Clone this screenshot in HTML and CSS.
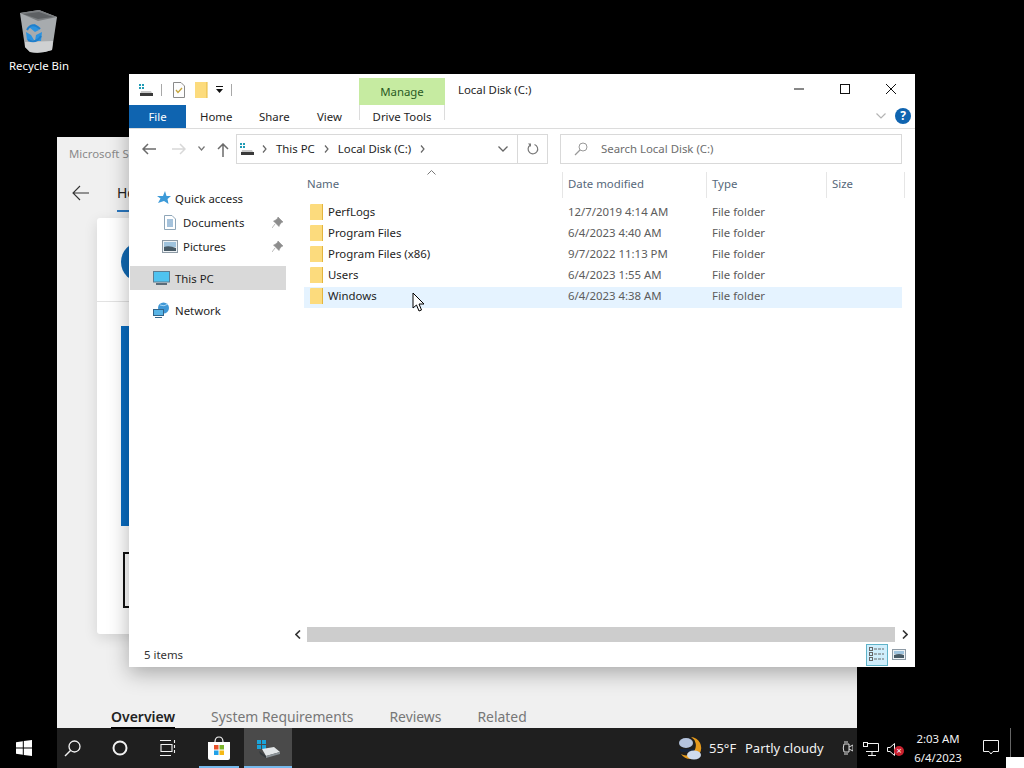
FILE: index.html
```html
<!DOCTYPE html>
<html lang="en">
<head>
<meta charset="utf-8">
<title>Local Disk (C:)</title>
<link rel="stylesheet" href="styles.css">
</head>
<body>
<div class="desktop">
  <div class="desk-icon">
    <svg class="bin" width="44" height="44" viewBox="0 0 44 44">
      <path d="M3 3 L22 0 L40 7 L35 40 Q24 44 13 42 L8 37 Z" fill="#a7abae"/>
      <path d="M3 3 L22 0 L40 7 L21 11 Z" fill="#7b7e81"/>
      <path d="M6 4 L22 2 L36 7 L21 9 Z" fill="#5d6063"/>
      <path d="M8 32 L36 31 L35 40 Q24 44 13 42 L8 37 Z" fill="#cfd1d2"/>
      <path d="M12 17 L18 14 L22 20 L18 22 Z M9 22 L14 25 L17 30 L10 30 Z M19 25 L25 22 L24 31 L18 31 Z" fill="#2b93e0"/>
      <path d="M10 20 Q15 11 23 19 M11 30 Q19 34 24 26" fill="none" stroke="#1f7fcc" stroke-width="2"/>
    </svg>
    <span>Recycle Bin</span>
  </div>

  <section class="store">
    <div class="store-title">Microsoft Store</div>
    <div class="store-nav">
      <svg class="store-back" width="18" height="16" viewBox="0 0 18 16"><path d="M8 1 L1 8 L8 15 M1 8 H17" fill="none" stroke="#333" stroke-width="1.1"/></svg>
      <span class="store-home">Home</span>
    </div>
    <div class="store-card">
      <div class="store-avatar"></div>
      <div class="store-rule"></div>
      <div class="store-banner"></div>
      <div class="store-box"></div>
    </div>
    <nav class="store-tabs">
      <span class="store-tab active">Overview</span>
      <span class="store-tab">System Requirements</span>
      <span class="store-tab">Reviews</span>
      <span class="store-tab">Related</span>
    </nav>
  </section>

  <section class="explorer">
    <header class="titlebar">
      <div class="qat">
        <svg class="q-drive" width="16" height="14" viewBox="0 0 16 14"><g fill="#1f9bb5"><rect x="1" y="1" width="2" height="2"/><rect x="4" y="1" width="2" height="2"/><rect x="1" y="4" width="2" height="2"/><rect x="4" y="4" width="2" height="2"/></g><path d="M3 8 H13 L15 12 H2 Z" fill="#c9c9c9"/><rect x="2" y="10" width="13" height="3" fill="#3a3a3a"/></svg>
        <i class="qat-sep"></i>
        <svg class="q-doc" width="12" height="16" viewBox="0 0 12 16"><path d="M.5.5 H8 L11.5 4 V15.5 H.5 Z" fill="#fdfdfd" stroke="#8a8a8a"/><path d="M3 8 L5 10.5 L9 6" fill="none" stroke="#c6a53b" stroke-width="1.3"/></svg>
        <svg class="q-folder" width="13" height="16" viewBox="0 0 13 16"><path d="M0 0 H12 V16 H0 Z" fill="#fcdb7d"/><path d="M12 0 V16" stroke="#e6b93f"/></svg>
        <svg class="q-drop" width="8" height="8" viewBox="0 0 8 8"><path d="M0 0 H7 V1 H0 Z M0 3 H7 L3.5 7 Z" fill="#111"/></svg>
        <i class="qat-sep last"></i>
      </div>
      <div class="context">
        <div class="context-head">Manage</div>
      </div>
      <div class="window-title">Local Disk (C:)</div>
      <div class="caption">
        <svg width="46" height="30" viewBox="0 0 46 30"><path d="M18 15 H28" stroke="#111"/></svg>
        <svg width="46" height="30" viewBox="0 0 46 30"><rect x="18.5" y="10.5" width="9" height="9" fill="none" stroke="#111"/></svg>
        <svg width="46" height="30" viewBox="0 0 46 30"><path d="M18 10 L28 20 M28 10 L18 20" stroke="#111"/></svg>
      </div>
    </header>

    <div class="ribbon">
      <span class="tab-file">File</span>
      <span class="tab">Home</span>
      <span class="tab">Share</span>
      <span class="tab">View</span>
      <span class="tab tab-drive">Drive Tools</span>
      <svg class="ribbon-chev" width="10" height="6" viewBox="0 0 10 6"><path d="M.5.5 L5 5 L9.5.5" fill="none" stroke="#b4b4b4" stroke-width="1.2"/></svg>
      <span class="help">?</span>
    </div>

    <div class="addressbar">
      <svg class="nav-icon" width="14" height="12" viewBox="0 0 14 12"><path d="M6 1 L1 6 L6 11 M1 6 H14" fill="none" stroke="#6b6b6b" stroke-width="1.5"/></svg>
      <svg class="nav-icon fwd" width="14" height="12" viewBox="0 0 14 12"><path d="M8 1 L13 6 L8 11 M0 6 H13" fill="none" stroke="#d8d8d8" stroke-width="1.5"/></svg>
      <svg class="nav-drop" width="7" height="5" viewBox="0 0 7 5"><path d="M.5.5 L3.5 4 L6.5.5" fill="none" stroke="#777" stroke-width="1.2"/></svg>
      <svg class="nav-up" width="12" height="14" viewBox="0 0 12 14"><path d="M1 6 L6 1 L11 6 M6 1 V14" fill="none" stroke="#6b6b6b" stroke-width="1.5"/></svg>
      <div class="path">
        <svg width="16" height="14" viewBox="0 0 16 14"><g fill="#1f9bb5"><rect x="1" y="1" width="2" height="2"/><rect x="4" y="1" width="2" height="2"/><rect x="1" y="4" width="2" height="2"/><rect x="4" y="4" width="2" height="2"/></g><path d="M3 8 H13 L15 12 H2 Z" fill="#c9c9c9"/><rect x="2" y="10" width="13" height="3" fill="#3a3a3a"/></svg>
        <svg class="crumb-sep first" width="5" height="8" viewBox="0 0 5 8"><path d="M1 .5 L4 4 L1 7.5" fill="none" stroke="#666" stroke-width="1.2"/></svg>
        <span>This PC</span>
        <svg class="crumb-sep" width="5" height="8" viewBox="0 0 5 8"><path d="M1 .5 L4 4 L1 7.5" fill="none" stroke="#666" stroke-width="1.2"/></svg>
        <span>Local Disk (C:)</span>
        <svg class="crumb-sep" width="5" height="8" viewBox="0 0 5 8"><path d="M1 .5 L4 4 L1 7.5" fill="none" stroke="#666" stroke-width="1.2"/></svg>
        <svg class="path-drop" width="10" height="6" viewBox="0 0 10 6"><path d="M.5.5 L5 5 L9.5.5" fill="none" stroke="#666" stroke-width="1.3"/></svg>
        <div class="refresh">
          <svg width="12" height="12" viewBox="0 0 12 12"><path d="M3 2.2 A4.8 4.8 0 1 0 7.5 1.5" fill="none" stroke="#777" stroke-width="1.2"/><path d="M1 .5 L4 .5 L4 4 Z" fill="#777"/></svg>
        </div>
      </div>
      <div class="search">
        <svg width="14" height="14" viewBox="0 0 14 14"><circle cx="9" cy="5" r="4" fill="none" stroke="#999"/><path d="M6 8 L1 13" stroke="#999" stroke-width="1.2"/></svg>
        <span>Search Local Disk (C:)</span>
      </div>
    </div>

    <div class="content">
      <aside class="tree">
        <div class="tree-row qa">
          <svg width="14" height="14" viewBox="0 0 14 14"><path d="M8 0 L9.5 5 L14 5 L10.5 8 L11.5 13 L7 10 L1 12 L3.5 7.5 L0 5 L6 5 Z" fill="#3c9ad8"/></svg>
          <span>Quick access</span>
        </div>
        <div class="tree-row sub">
          <svg class="i-doc" width="12" height="15" viewBox="0 0 12 15"><path d="M.5.5 H8 L11.5 4 V14.5 H.5 Z" fill="#fff" stroke="#8fa6b8"/><path d="M3 5 H9 M3 7 H9 M3 9 H9 M3 11 H9" stroke="#4c86b8"/></svg>
          <span>Documents</span>
          <svg class="pin" width="11" height="11" viewBox="0 0 11 11"><path d="M6 0 L11 5 L9.5 5.5 L7.5 8 L7 9.5 L1.5 4 L3 3.5 L5.5 1.5 Z M3 7 L0 11" fill="#8d8d8d" stroke="#8d8d8d" stroke-width=".6"/></svg>
        </div>
        <div class="tree-row sub">
          <svg width="16" height="13" viewBox="0 0 16 13"><rect x=".5" y=".5" width="15" height="12" fill="#eef2f5" stroke="#8d9aa5"/><path d="M2 2 H14 V7 H2 Z" fill="#9fc3dd"/><path d="M2 7 Q7 5 14 8 V11 H2 Z" fill="#475a66"/></svg>
          <span>Pictures</span>
          <svg class="pin" width="11" height="11" viewBox="0 0 11 11"><path d="M6 0 L11 5 L9.5 5.5 L7.5 8 L7 9.5 L1.5 4 L3 3.5 L5.5 1.5 Z M3 7 L0 11" fill="#8d8d8d" stroke="#8d8d8d" stroke-width=".6"/></svg>
        </div>
        <div class="tree-row pc">
          <svg width="17" height="15" viewBox="0 0 17 15"><rect x=".5" y=".5" width="16" height="10.5" fill="#4fc3f0" stroke="#5d7d92"/><path d="M3 13 H14" stroke="#5a6b78" stroke-width="2"/></svg>
          <span>This PC</span>
        </div>
        <div class="tree-row net">
          <svg width="17" height="16" viewBox="0 0 17 16"><circle cx="10.5" cy="6" r="5.5" fill="#3f97d6"/><path d="M7 3 Q11 5 15 2" stroke="#a8d8f5" fill="none"/><rect x=".5" y="7.5" width="10" height="6" fill="#58b4e6" stroke="#33658a"/><path d="M2 15.5 H9" stroke="#33658a"/></svg>
          <span>Network</span>
        </div>
      </aside>

      <div class="files">
        <svg class="sort-caret" width="9" height="5" viewBox="0 0 9 5"><path d="M.5 4.5 L4.5 .5 L8.5 4.5" fill="none" stroke="#777"/></svg>
        <div class="columns">
          <span class="col-name">Name</span>
          <span class="col-date">Date modified</span>
          <span class="col-type">Type</span>
          <span class="col-size">Size</span>
        </div>
        <ul class="rows">
          <li class="row"><span class="folder"></span><span class="r-name">PerfLogs</span><span class="r-date">12/7/2019 4:14 AM</span><span class="r-type">File folder</span></li>
          <li class="row"><span class="folder"></span><span class="r-name">Program Files</span><span class="r-date">6/4/2023 4:40 AM</span><span class="r-type">File folder</span></li>
          <li class="row"><span class="folder"></span><span class="r-name">Program Files (x86)</span><span class="r-date">9/7/2022 11:13 PM</span><span class="r-type">File folder</span></li>
          <li class="row"><span class="folder"></span><span class="r-name">Users</span><span class="r-date">6/4/2023 1:55 AM</span><span class="r-type">File folder</span></li>
          <li class="row hover"><span class="folder"></span><span class="r-name">Windows</span><span class="r-date">6/4/2023 4:38 AM</span><span class="r-type">File folder</span></li>
        </ul>
        <div class="hscroll">
          <span class="sc-btn"><svg width="6" height="9" viewBox="0 0 6 9"><path d="M5 .5 L1 4.5 L5 8.5" fill="none" stroke="#333" stroke-width="1.6"/></svg></span>
          <span class="sc-thumb"></span>
          <span class="sc-btn"><svg width="6" height="9" viewBox="0 0 6 9"><path d="M1 .5 L5 4.5 L1 8.5" fill="none" stroke="#333" stroke-width="1.6"/></svg></span>
        </div>
      </div>
    </div>

    <footer class="statusbar">
      <span class="item-count">5 items</span>
      <div class="views">
        <span class="view active"><svg width="16" height="15" viewBox="0 0 16 15"><g fill="none" stroke="#666"><rect x=".5" y=".5" width="3" height="3"/><rect x=".5" y="5.5" width="3" height="3"/><rect x=".5" y="10.5" width="3" height="3"/></g><path d="M5 2 H15 M5 7 H15 M5 12 H15" stroke="#666" stroke-dasharray="3 1"/></svg></span>
        <span class="view"><svg width="14" height="11" viewBox="0 0 14 11"><rect x=".5" y=".5" width="13" height="10" fill="#eef2f5" stroke="#8d9aa5"/><path d="M2 2 H12 V5 H2 Z" fill="#9fc3dd"/><path d="M2 6 Q7 4 12 6 V9 H2 Z" fill="#475a66"/></svg></span>
      </div>
    </footer>
  </section>

  <svg class="cursor" width="14" height="21" viewBox="0 0 14 21"><path d="M1 1 V16 L4.5 13 L7 19 L9.5 18 L7 12 L12 12 Z" fill="#fff" stroke="#000"/></svg>

  <footer class="taskbar">
    <span class="tb-btn"><svg width="16" height="16" viewBox="0 0 16 16"><path d="M0 2.2 L6.8 1.2 V7.5 H0 Z M7.8 1 L16 0 V7.5 H7.8 Z M0 8.5 H6.8 V14.8 L0 13.8 Z M7.8 8.5 H16 V16 L7.8 15 Z" fill="#fff"/></svg></span>
    <span class="tb-btn"><svg width="17" height="17" viewBox="0 0 17 17"><circle cx="10.5" cy="6.5" r="5.5" fill="none" stroke="#f2f2f2" stroke-width="1.3"/><path d="M6.5 10.5 L1 16" stroke="#f2f2f2" stroke-width="1.5"/></svg></span>
    <span class="tb-btn"><svg width="16" height="16" viewBox="0 0 16 16"><circle cx="8" cy="8" r="6.5" fill="none" stroke="#f2f2f2" stroke-width="2"/></svg></span>
    <span class="tb-btn"><svg width="17" height="16" viewBox="0 0 17 16"><path d="M0 .5 H11 M0 15.5 H11 M1 4.5 H12 V11.5 H1 Z M14.5 0 V3 M14.5 5 V8 M14.5 10 V13" fill="none" stroke="#f2f2f2" stroke-width="1.1"/></svg></span>
    <span class="tb-btn running store-btn"><svg width="24" height="25" viewBox="0 0 24 25"><path d="M8 6 Q8 1 12 1 Q16 1 16 6" fill="none" stroke="#f2f2f2" stroke-width="1.2"/><path d="M1 6 H23 V22 Q23 24 21 24 H3 Q1 24 1 22 Z" fill="#fff"/><rect x="7" y="9" width="4.5" height="4.5" fill="#e8512a"/><rect x="12.5" y="9" width="4.5" height="4.5" fill="#7db52b"/><rect x="7" y="14.5" width="4.5" height="4.5" fill="#22a1e8"/><rect x="12.5" y="14.5" width="4.5" height="4.5" fill="#f5b915"/></svg></span>
    <span class="tb-btn running current"><svg width="24" height="19" viewBox="0 0 24 19"><g fill="#1aa3d8"><rect x="1" y="1" width="4" height="4"/><rect x="6" y="1" width="4" height="4"/><rect x="1" y="6" width="4" height="4"/><rect x="6" y="6" width="4" height="4"/></g><path d="M6 10 L18 8 L24 13 L10 17 Z" fill="#e2e6e8"/><path d="M3 12 L10 17 V19 L4 15 Z" fill="#33393d"/><path d="M10 17 L24 13 V15 L10 19 Z" fill="#8b9398"/></svg></span>
    <div class="tray">
      <svg class="weather" width="25" height="25" viewBox="0 0 25 25"><path d="M14 1 A11 11 0 1 1 4 18 A9 9 0 0 0 14 1 Z" fill="#e59a1c"/><ellipse cx="9" cy="7" rx="7" ry="5" fill="#b5c4de"/><path d="M2 13 H17 V16 H4 Z" fill="#16243a"/><ellipse cx="17" cy="19" rx="7" ry="4.5" fill="#cfdcef"/></svg>
      <span class="temp">55°F</span>
      <span class="cond">Partly cloudy</span>
      <svg class="meet" width="11" height="14" viewBox="0 0 11 14"><path d="M2 3 H7 V11 H2 Q.5 7 2 3 Z M7 6 L11 4 V10 L7 8 M2 1 H6 M2 13 H6" fill="none" stroke="#ddd"/></svg>
      <svg class="net-tray" width="16" height="14" viewBox="0 0 16 14"><path d="M3 1.5 H15.5 V9.5 H3 M9 9.5 V13 M5 13.5 H13" fill="none" stroke="#f2f2f2"/><rect x=".5" y=".5" width="4" height="4" fill="#000" stroke="#f2f2f2"/></svg>
      <span class="vol">
        <svg width="9" height="13" viewBox="0 0 9 13"><path d="M.5 4.5 H3 L7.5 .5 V12.5 L3 8.5 H.5 Z" fill="none" stroke="#f2f2f2"/></svg>
        <span class="vol-x">×</span>
      </span>
      <span class="clock"><span>2:03 AM</span><span>6/4/2023</span></span>
      <svg class="notify" width="16" height="15" viewBox="0 0 16 15"><path d="M.5 .5 H15.5 V11.5 H10 L8 14 L6 11.5 H.5 Z" fill="none" stroke="#f2f2f2"/></svg>
      <i class="show-desktop"></i>
    </div>
  </footer>
  <div class="corner-window"></div>
</div>
</body>
</html>
```

FILE: styles.css
```css
* { box-sizing: border-box; }
html, body { margin: 0; height: 100%; }
body { background: #000; font-family: "Noto Sans", "Open Sans", sans-serif; overflow: hidden; }
.desktop { position: relative; width: 1024px; height: 768px; overflow: hidden; background: #000; }

.desk-icon { position: absolute; left: 0; top: 0; width: 78px; padding-top: 10px; display: flex; flex-direction: column; align-items: center; color: #fff; font-size: 11.4px; }
.desk-icon span { margin-top: 3px; line-height: 18px; }

.store { position: absolute; left: 57px; top: 137px; width: 800px; height: 631px; background: #f0f0f0; color: #222; }
.store-title { padding: 9px 12px 11px; font-size: 11.4px; color: #8a8a8a; line-height: 16px; white-space: nowrap; }
.store-nav { display: flex; align-items: flex-start; height: 40px; padding-left: 15px; gap: 27px; font-size: 14px; color: #222; }
.store-back { margin-top: 12px; }
.store-home { border-bottom: 2px solid #2b78c0; height: 39px; padding-top: 10px; width: 40px; }
.store-card { position: absolute; left: 40px; top: 81px; width: 700px; height: 416px; background: #fff; border-radius: 3px; box-shadow: 0 4px 14px rgba(0,0,0,.12); }
.store-avatar { position: absolute; left: 24px; top: 24px; width: 40px; height: 40px; border-radius: 50%; background: #1169b3; }
.store-rule { position: absolute; left: 0; top: 83px; width: 100%; height: 1px; background: #e2e2e2; }
.store-banner { position: absolute; left: 24px; top: 108px; width: 100px; height: 200px; background: #0a6cc0; }
.store-box { position: absolute; left: 26px; top: 334px; width: 50px; height: 56px; border: 2px solid #111; }
.store-tabs { position: absolute; left: 54px; top: 570px; display: flex; gap: 36px; font-size: 13.9px; color: #777; line-height: 20px; }
.store-tab.active { color: #222; font-weight: 600; position: relative; font-size: 14px; }
.store-tab.active::after { content: ""; position: absolute; left: 0; right: 0; bottom: -2px; height: 2px; background: #000; }

.explorer { position: absolute; left: 129px; top: 74px; width: 786px; height: 593px; background: #fff; display: flex; flex-direction: column; font-size: 11.4px; color: #1e1e1e; box-shadow: 0 6px 20px rgba(0,0,0,.3); }

.titlebar { display: flex; height: 31px; flex: none; position: relative; }
.qat { display: flex; align-items: center; padding-left: 9px; width: 230px; height: 31px; }
.qat-sep { width: 1px; height: 12px; background: #a8a8a8; margin-left: 7px; }
.q-doc { margin-left: 11px; }
.q-folder { margin-left: 10px; }
.q-drop { margin-left: 8px; }
.context { width: 86px; position: absolute; left: 230px; top: 4px; }
.context-head { background: #c6eba1; height: 27px; text-align: center; line-height: 27px; color: #2a5a24; }
.window-title { position: absolute; left: 329px; top: 8px; line-height: 15px; }
.caption { position: absolute; right: 1px; top: 0; display: flex; }
.caption svg { display: block; }

.ribbon { height: 24px; flex: none; display: flex; align-items: stretch; position: relative; border-bottom: 1px solid #dcdcdc; }
.tab-file { width: 57px; background: #0f64b0; color: #fff; text-align: center; line-height: 24px; height: 23px; }
.tab { line-height: 24px; padding: 0 14px; white-space: nowrap; }
.tab:nth-child(2) { width: 59px; }
.tab:nth-child(3) { width: 58px; }
.tab:nth-child(4) { width: 54px; }
.tab.tab-drive { position: absolute; left: 230px; top: 0; width: 86px; text-align: center; padding: 0; height: 15px; background: #fff; border-left: 1px solid #dcdcdc; border-right: 1px solid #dcdcdc; }
.ribbon-chev { position: absolute; left: 747px; top: 8px; }
.help { position: absolute; left: 766px; top: 3px; width: 16px; height: 16px; border-radius: 50%; background: #0f64b0; color: #fff; font-weight: 700; font-size: 12px; line-height: 16px; text-align: center; }

.addressbar { height: 47px; flex: none; position: relative; }
.nav-icon { position: absolute; left: 13px; top: 14px; }
.nav-icon.fwd { left: 43px; }
.nav-drop { position: absolute; left: 69px; top: 17px; }
.nav-up { position: absolute; left: 88px; top: 14px; }
.path { position: absolute; left: 107px; top: 5px; width: 312px; height: 30px; border: 1px solid #d9d9d9; display: flex; align-items: center; padding: 0 0 1px 2px; }
.crumb-sep { margin: 0 9px 0 9px; }
.crumb-sep.first { margin: 0 9px 0 7px; }
.path-drop { position: absolute; left: 261px; top: 11px; }
.refresh { position: absolute; right: 0; top: 0; width: 30px; height: 28px; border-left: 1px solid #d9d9d9; display: flex; align-items: center; justify-content: center; }
.search { position: absolute; left: 431px; top: 5px; width: 342px; height: 30px; border: 1px solid #d9d9d9; display: flex; align-items: center; padding: 0 0 1px 13px; gap: 13px; color: #6d6d6d; }

.content { flex: 1; display: flex; min-height: 0; position: relative; }
.tree { width: 158px; padding-top: 10px; flex: none; }
.tree-row { display: flex; align-items: center; height: 24px; position: relative; }
.tree-row.qa { padding-left: 28px; gap: 4px; }
.tree-row.sub { padding-left: 33px; gap: 5px; }
.i-doc { margin: 0 2px; }
.tree-row.pc { margin: 8px 1px 0; background: #d9d9d9; padding-left: 23px; gap: 5px; }
.tree-row.net { margin-top: 8px; padding-left: 24px; gap: 5px; }
.pin { position: absolute; left: 143px; top: 7px; }

.files { flex: 1; position: relative; min-width: 0; }
.sort-caret { position: absolute; left: 140px; top: -6px; }
.columns { height: 26px; margin: -4px 0 0 20px; display: grid; grid-template-columns: 255px 144px 120px 79px; color: #56687a; }
.columns span { line-height: 23px; height: 26px; }
.col-date, .col-type, .col-size { border-left: 1px solid #e6e6e6; padding-left: 5px; }
.col-size { border-right: 1px solid #e6e6e6; }
.rows { list-style: none; margin: 5px 0 0; padding: 0; }
.row { display: flex; align-items: center; height: 21px; margin-left: 17px; width: 598px; padding: 0 0 4px 6px; }
.row.hover { background: #e5f3ff; }
.folder { width: 13px; height: 16px; background: #fcdb7d; border-right: 1px solid #e3b53f; margin-right: 5px; flex: none; border-radius: 1px 0 0 0; }
.r-name { width: 240px; }
.r-date { width: 144px; color: #5c5c5c; }
.r-type { color: #5c5c5c; }

.hscroll { position: absolute; left: 3px; top: 451px; width: 623px; height: 15px; display: flex; align-items: center; }
.sc-btn { width: 16px; height: 15px; display: flex; align-items: center; justify-content: center; flex: none; }
.sc-thumb { flex: 1; height: 15px; background: #cdcdcd; margin: 0 2px 0 1px; }

.statusbar { height: 33px; flex: none; display: flex; align-items: center; justify-content: space-between; padding: 8px 5px 0 15px; color: #333; }
.views { display: flex; align-items: center; }
.view { display: flex; align-items: center; justify-content: center; width: 22px; height: 22px; }
.view.active { background: #cfeefc; border: 1px solid #5fb3c9; }

.cursor { position: absolute; left: 412px; top: 292px; }

.taskbar { position: absolute; left: 0; bottom: 0; width: 1024px; height: 40px; background: rgba(0,0,0,.87); display: flex; color: #f2f2f2; }
.tb-btn { width: 48px; flex: none; display: flex; align-items: center; justify-content: center; position: relative; }
.store-btn { margin-left: 3px; }
.running::after { content: ""; position: absolute; left: 4px; right: 4px; bottom: 0; height: 2px; background: #76b9ed; }
.running.current { margin-left: 1px; background: #4a4a4a; }
.running.current::after { left: 0; right: 0; }
.tray { flex: 1; position: relative; font-size: 13px; }
.weather { position: absolute; left: 385px; top: 8px; }
.temp { position: absolute; left: 417px; top: 11px; line-height: 19px; }
.cond { position: absolute; left: 453px; top: 11px; line-height: 19px; white-space: nowrap; }
.meet { position: absolute; left: 550px; top: 13px; }
.net-tray { position: absolute; left: 571px; top: 14px; }
.vol { position: absolute; left: 595px; top: 14px; }
.vol-x { position: absolute; left: 7px; top: 4px; width: 10px; height: 10px; border-radius: 50%; background: #c8212f; color: #fff; font-size: 9px; line-height: 10px; text-align: center; }
.clock { position: absolute; left: 610px; top: 1px; width: 72px; display: flex; flex-direction: column; align-items: center; font-size: 11.4px; line-height: 19px; }
.notify { position: absolute; left: 691px; top: 12px; }
.show-desktop { position: absolute; left: 718px; top: 0; width: 1px; height: 29px; background: #666; }
.corner-window { position: absolute; left: 1006px; top: 757px; width: 18px; height: 11px; background: #fff; }
```
